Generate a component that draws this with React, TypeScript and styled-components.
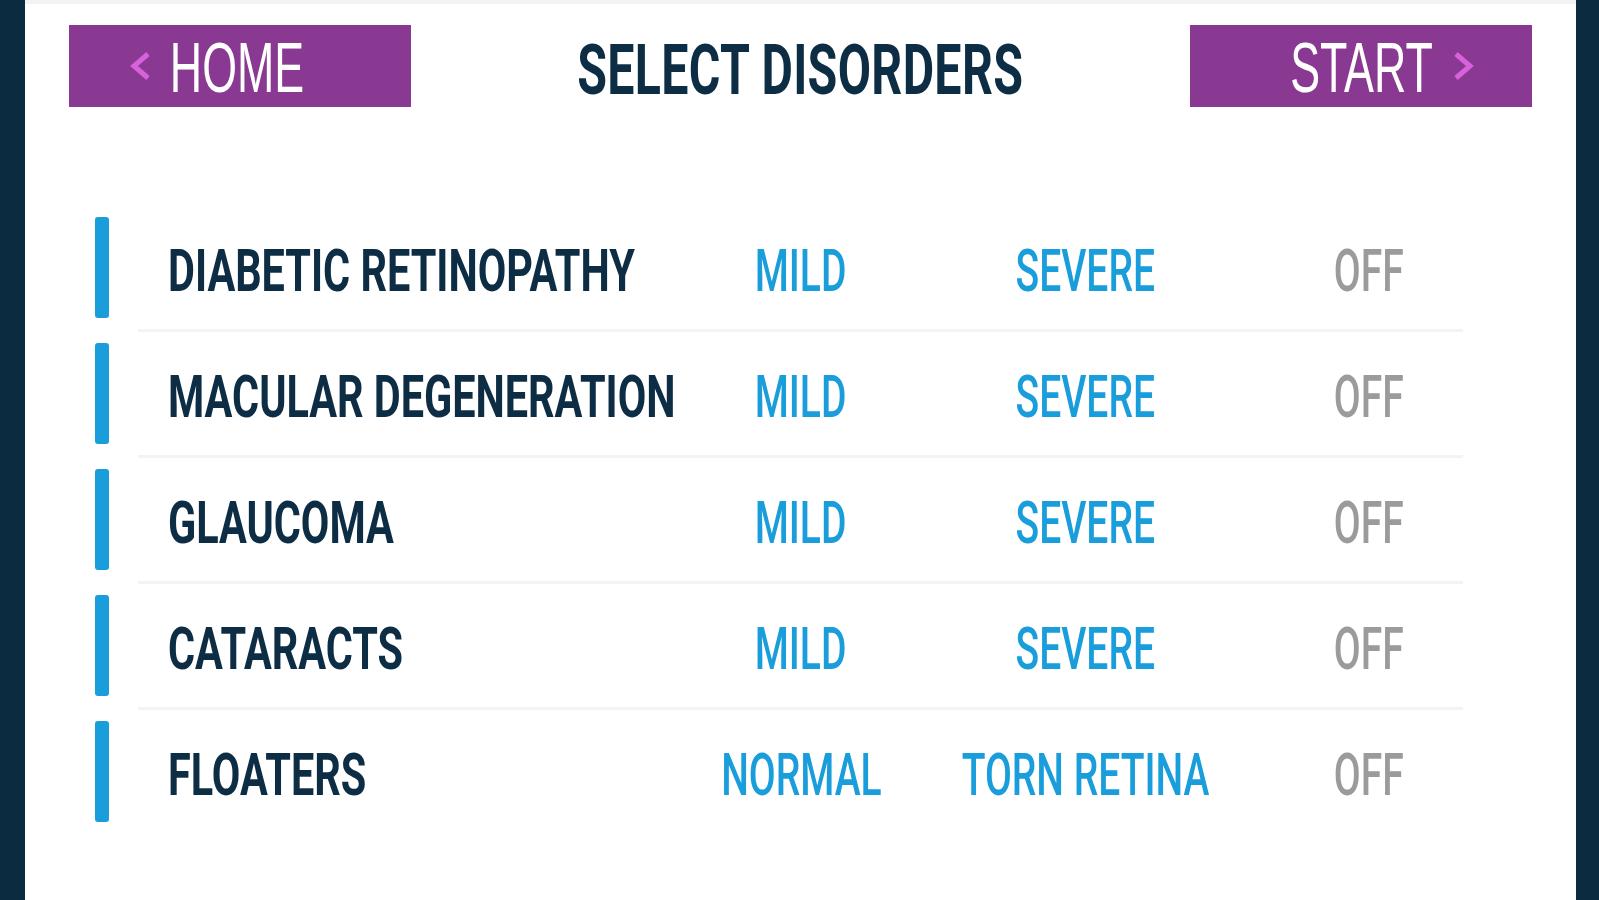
import React from 'react';
import styled, { createGlobalStyle } from 'styled-components';

const GlobalStyle = createGlobalStyle`
  html, body {
    margin: 0;
    padding: 0;
    background: #0b2b40;
  }
  body {
    font-family: Roboto, "Liberation Sans", sans-serif;
  }
`;

const NAVY = '#0d2d45';
const BLUE = '#1a9edb';
const PURPLE = '#8a3992';
const PINK = '#d862dc';

const Page = styled.div`
  display: flex;
  min-height: 900px;
  padding: 0 23px 0 25px;
  background: #0b2b40;
`;

const Panel = styled.div`
  flex: 1;
  min-width: 0;
  display: flex;
  flex-direction: column;
  background: #ffffff;
  border-top: 4px solid #f3f3f3;
  padding: 21px 44px 0 44px;
`;

const Header = styled.div`
  display: flex;
  align-items: center;
  justify-content: space-between;
`;

const NavButton = styled.button<{ $align: 'left' | 'right' }>`
  flex: none;
  width: 342px;
  height: 82px;
  border: 0;
  padding: 0;
  background: ${PURPLE};
  display: flex;
  align-items: center;
  justify-content: ${(p) => (p.$align === 'left' ? 'flex-start' : 'flex-end')};
  padding-left: ${(p) => (p.$align === 'left' ? '61px' : '0')};
  padding-right: ${(p) => (p.$align === 'right' ? '58px' : '0')};
  gap: ${(p) => (p.$align === 'left' ? '18px' : '24px')};
  cursor: pointer;
`;

// condensed look: the text is squeezed horizontally
const Squeeze = styled.span<{ $origin?: string; $scale?: number }>`
  display: inline-block;
  transform: scaleX(${(p) => p.$scale ?? 0.69});
  transform-origin: ${(p) => p.$origin || 'center'};
  white-space: nowrap;
`;

const ButtonText = styled.span`
  color: #ffffff;
  font-size: 70px;
  font-weight: 500;
  line-height: 1;
  width: 136px;
  padding-top: 4px;
  display: flex;
  justify-content: center;
`;

const Title = styled.h1`
  margin: 0;
  padding-top: 7px;
  min-width: 0;
  display: flex;
  justify-content: center;
  width: 460px;
  color: ${NAVY};
  font-size: 70px;
  font-weight: 700;
  line-height: 1;
  letter-spacing: 0.5px;
`;

const Chevron = ({ dir }: { dir: 'left' | 'right' }) => (
  <svg width="21" height="30" viewBox="0 0 21 30">
    <polyline
      points={dir === 'left' ? '18,3 4,15 18,27' : '3,3 17,15 3,27'}
      fill="none"
      stroke={PINK}
      strokeWidth="5"
    />
  </svg>
);

const List = styled.div`
  display: flex;
  flex-direction: column;
  margin: 110px 21px 0 26px;
`;

const Row = styled.div`
  display: grid;
  grid-template-columns: 14px minmax(0, 1fr) repeat(3, 284px);
  align-items: center;
  height: 101px;
`;

const Marker = styled.div`
  width: 14px;
  height: 101px;
  border-radius: 3px;
  background: ${BLUE};
`;

const Label = styled.div`
  min-width: 0;
  padding-left: 59px;
  padding-top: 7px;
  color: ${NAVY};
  font-size: 60px;
  font-weight: 700;
  line-height: 1;
  white-space: nowrap;
`;

const Option = styled.div<{ $off?: boolean }>`
  display: flex;
  justify-content: center;
  padding-top: 7px;
  color: ${(p) => (p.$off ? '#9b9b9b' : BLUE)};
  font-size: 60px;
  font-weight: 500;
  line-height: 1;
  cursor: pointer;
`;

const Divider = styled.div`
  height: 3px;
  width: 1325px;
  margin: 11px 0 11px 43px;
  background: #f3f3f3;
`;

type Disorder = { name: string; options: [string, string] };

const disorders: Disorder[] = [
  { name: 'DIABETIC RETINOPATHY', options: ['MILD', 'SEVERE'] },
  { name: 'MACULAR DEGENERATION', options: ['MILD', 'SEVERE'] },
  { name: 'GLAUCOMA', options: ['MILD', 'SEVERE'] },
  { name: 'CATARACTS', options: ['MILD', 'SEVERE'] },
  { name: 'FLOATERS', options: ['NORMAL', 'TORN RETINA'] },
];

const App = () => {
  return (
    <Page>
      <GlobalStyle />
      <Panel>
        <Header>
          <NavButton $align="left">
            <Chevron dir="left" />
            <ButtonText>
              <Squeeze $scale={0.64}>HOME</Squeeze>
            </ButtonText>
          </NavButton>
          <Title>
            <Squeeze>SELECT DISORDERS</Squeeze>
          </Title>
          <NavButton $align="right">
            <ButtonText>
              <Squeeze $scale={0.64}>START</Squeeze>
            </ButtonText>
            <Chevron dir="right" />
          </NavButton>
        </Header>

        <List>
          {disorders.map((d, i) => (
            <React.Fragment key={d.name}>
              <Row>
                <Marker />
                <Label>
                  <Squeeze $origin="left">{d.name}</Squeeze>
                </Label>
                <Option>
                  <Squeeze $scale={0.65}>{d.options[0]}</Squeeze>
                </Option>
                <Option>
                  <Squeeze $scale={0.65}>{d.options[1]}</Squeeze>
                </Option>
                <Option $off>
                  <Squeeze $scale={0.65}>OFF</Squeeze>
                </Option>
              </Row>
              {i < disorders.length - 1 && <Divider />}
            </React.Fragment>
          ))}
        </List>
      </Panel>
    </Page>
  );
};

export default App;
